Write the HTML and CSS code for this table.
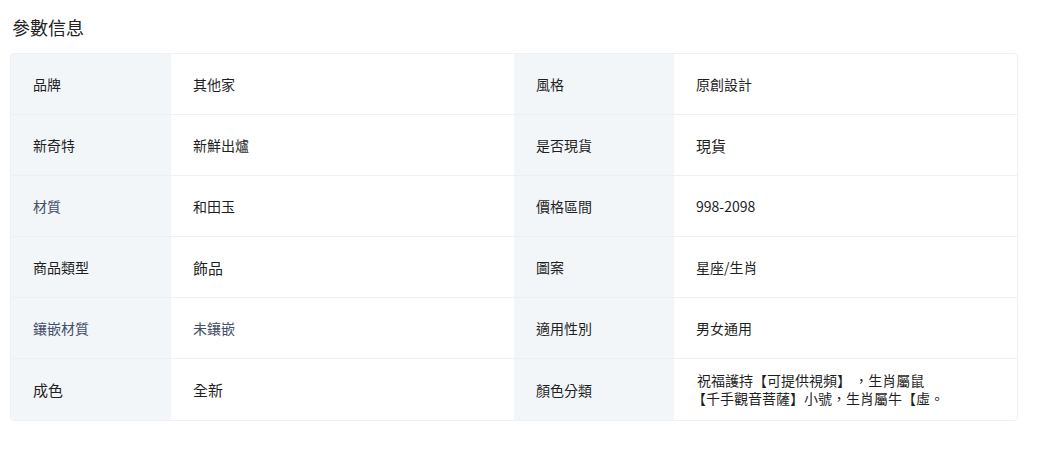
FILE: index.html
```html
<!DOCTYPE html>
<html lang="zh-Hant">
<head>
<meta charset="utf-8">
<link rel="stylesheet" href="styles.css">
</head>
<body>
<div class="page">
  <h2 class="title">參數信息</h2>
  <div class="table">
    <div class="label">品牌</div><div class="value">其他家</div>
    <div class="label">風格</div><div class="value">原創設計</div>

    <div class="label">新奇特</div><div class="value">新鮮出爐</div>
    <div class="label">是否現貨</div><div class="value big">現貨</div>

    <div class="label muted">材質</div><div class="value">和田玉</div>
    <div class="label">價格區間</div><div class="value">998-2098</div>

    <div class="label">商品類型</div><div class="value big">飾品</div>
    <div class="label">圖案</div><div class="value">星座/生肖</div>

    <div class="label muted">鑲嵌材質</div><div class="value muted">未鑲嵌</div>
    <div class="label">適用性別</div><div class="value">男女通用</div>

    <div class="label big last">成色</div><div class="value big last">全新</div>
    <div class="label last">顏色分類</div><div class="value multi last">祝福護持【可提供視頻】 ，生肖屬鼠<br>【千手觀音菩薩】小號，生肖屬牛【虛。</div>
  </div>
</div>
</body>
</html>
```

FILE: styles.css
```css
* { box-sizing: border-box; }
body {
  margin: 0;
  background: #ffffff;
  font-family: "Noto Sans CJK TC", "Noto Sans", sans-serif;
  color: #1f1f1f;
}
.page {
  padding: 14px 23px 0 10px;
}
.title {
  margin: 0 0 13px 2px;
  font-size: 18px;
  line-height: 26px;
  font-weight: 400;
  color: #222;
}
.table {
  display: grid;
  grid-template-columns: 160px 1fr 160px 1fr;
  grid-auto-rows: 61px;
  border: 1px solid #eef0f3;
  border-radius: 4px;
  overflow: hidden;
  box-shadow: 0 1px 2px rgba(0,0,0,0.03);
}
.label, .value {
  display: flex;
  align-items: center;
  padding: 0 22px;
  font-size: 14px;
  border-bottom: 1px solid #eef0f3;
  color: #1f1f1f;
}
.label {
  background: #f3f6f9;
  border-bottom-color: #eceff3;
}
.last { border-bottom: none; }
.big { font-size: 15px; font-weight: 400; }
.muted { color: #44506a; }
.multi {
  display: block;
  font-size: 14px;
  line-height: 18px;
  padding: 12px 10px 0 18px;
  text-indent: 5px;
}
```
